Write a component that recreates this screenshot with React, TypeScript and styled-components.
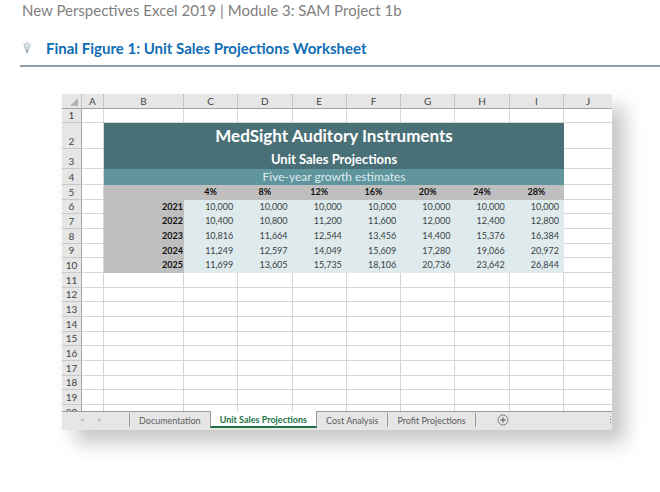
import React from "react";
import styled, { createGlobalStyle, css } from "styled-components";

const GlobalStyle = createGlobalStyle`
  * { box-sizing: border-box; }
  body { margin: 0; background: #fff; }
`;

const gothic = `"Lato", "Open Sans", sans-serif`;

const Page = styled.main`
  font-family: ${gothic};
  overflow: hidden;
  padding-bottom: 60px;
`;

const DocTitle = styled.p`
  margin: 0 0 0 22px;
  font-size: 15px;
  line-height: 20px;
  color: #7f7f7f;
  white-space: nowrap;
`;

const FigureHeading = styled.header`
  display: flex;
  align-items: center;
  gap: 14px;
  margin: 18px 0 27px 20px;
  padding: 0 0 7px 2px;
  border-bottom: 2px solid #919ba5;
`;

const FigureTitle = styled.h1`
  margin: 0;
  font-size: 15px;
  line-height: 20px;
  font-weight: 700;
  color: #0f6db5;
  white-space: nowrap;
`;

const Workbook = styled.section`
  margin: 0 48px 0 62px;
  background: #fff;
  box-shadow: 13px 13px 18px rgba(0, 0, 0, 0.22);
`;

const SheetViewport = styled.div`
  max-height: 317px;
  overflow: hidden;
`;

const Sheet = styled.table`
  width: 100%;
  table-layout: fixed;
  border-collapse: separate;
  border-spacing: 0;
  font-size: 10px;
  line-height: 12px;
  color: #3a4244;
`;

const Col = styled.col<{ $w?: number }>`
  ${(p) => p.$w && `width: ${p.$w}px;`}
`;

const Row = styled.tr<{ $h: number }>`
  height: ${(p) => p.$h}px;
`;

const headCell = css`
  padding: 0;
  background: #e6e6e6;
  font-weight: 400;
  color: #444;
`;

const ColumnHead = styled.th`
  ${headCell}
  border-right: 1px solid #c4c4c4;
  border-bottom: 1px solid #a3a3a3;
  &:last-child { border-right: 0; }
`;

const Corner = styled.td`
  ${headCell}
  border-right: 1px solid #c4c4c4;
  border-bottom: 1px solid #a3a3a3;
  vertical-align: bottom;
  text-align: right;
  svg { display: block; margin: 0 2px 1px auto; }
`;

const RowHead = styled.th`
  ${headCell}
  padding-bottom: 1px;
  border-right: 1px solid #a9a9a9;
  border-bottom: 1px solid #c8c8c8;
  text-align: center;
  vertical-align: bottom;
`;

const Cell = styled.td`
  padding: 0;
  border-right: 1px solid #d6d6d6;
  border-bottom: 1px solid #d6d6d6;
  &:last-child { border-right: 0; }
`;

const Banner = styled.th<{ $size: number; $light?: boolean }>`
  padding: 0;
  background: ${(p) => (p.$light ? "#60959e" : "#4a7077")};
  color: ${(p) => (p.$light ? "#dcebed" : "#fff")};
  font-size: ${(p) => p.$size}px;
  line-height: 14px;
  font-weight: ${(p) => (p.$light ? 400 : 700)};
  text-align: center;
  vertical-align: middle;
`;

const GreyCell = styled.th<{ $align?: "right" | "center" }>`
  padding: 1px 1px 0 0;
  background: #bfbfbf;
  color: #111;
  font-size: 9px;
  font-weight: 700;
  text-align: ${(p) => p.$align ?? "center"};
  vertical-align: top;
`;

const Value = styled.td`
  padding: 1px 5px 0 0;
  background: #deeaec;
  font-size: 9px;
  text-align: right;
  vertical-align: top;
`;

const TabBar = styled.nav`
  display: flex;
  align-items: stretch;
  height: 19px;
  padding-bottom: 2px;
  background: #e6e6e6;
  white-space: nowrap;
  overflow: hidden;
`;

const edge = css`
  border: 0 solid #9b9b9b;
  border-top-width: 1px;
`;

const Scrollers = styled.div`
  ${edge}
  display: flex;
  align-items: center;
  gap: 14px;
  width: 67px;
  padding-left: 18px;
`;

const Scroller = styled.button`
  display: flex;
  align-items: center;
  margin: 0;
  padding: 0;
  background: none;
  border: 0;
`;

const Divider = styled.span`
  ${edge}
  padding-top: 1px;
  &::after {
    content: "";
    display: block;
    width: 1px;
    height: 14px;
    background: #9b9b9b;
  }
`;

const Tab = styled.button<{ $active?: boolean }>`
  ${edge}
  margin: 0;
  padding: 1px 9px 0;
  font-family: inherit;
  font-size: 9px;
  line-height: 14px;
  background: none;
  color: #5a5a5a;
  ${(p) =>
    p.$active &&
    css`
      padding-top: 3px;
      border-width: 0 1px 2px;
      border-bottom-color: #217346;
      background: #fff;
      color: #217346;
      font-weight: 700;
      line-height: 12px;
    `}
`;

const TabRest = styled.div`
  ${edge}
  flex: 1;
  display: flex;
  align-items: center;
  justify-content: space-between;
  padding-left: 21px;
`;

const columns = ["A", "B", "C", "D", "E", "F", "G", "H", "I", "J"];
const rates = ["4%", "8%", "12%", "16%", "20%", "24%", "28%"];
const projections: [string, string[]][] = [
  ["2021", ["10,000", "10,000", "10,000", "10,000", "10,000", "10,000", "10,000"]],
  ["2022", ["10,400", "10,800", "11,200", "11,600", "12,000", "12,400", "12,800"]],
  ["2023", ["10,816", "11,664", "12,544", "13,456", "14,400", "15,376", "16,384"]],
  ["2024", ["11,249", "12,597", "14,049", "15,609", "17,280", "19,066", "20,972"]],
  ["2025", ["11,699", "13,605", "15,735", "18,106", "20,736", "23,642", "26,844"]],
];
const emptyRows = [11, 12, 13, 14, 15, 16, 17, 18, 19, 20];

const rowHeight = (n: number) => (n % 3 === 0 ? 14 : 15);

function Bulb() {
  return (
    <svg width="10" height="14" viewBox="0 0 10 14" fill="none" stroke="#a3b1bb" aria-hidden="true">
      <path d="M.5 4h1M8.5 4h1M1.5 1.2l.8.7M8.5 1.2l-.8.7M5 0v1" strokeWidth=".7" />
      <path d="M3.7 8.7C3.6 7.4 2.4 6.6 2.4 4.8a2.6 2.6 0 0 1 5.2 0c0 1.8-1.2 2.6-1.3 3.9z" fill="#e3eaee" strokeWidth=".9" />
      <path d="M4.2 4.9l.8 1 .8-1M5 6v2.6" strokeWidth=".6" />
      <path d="M3.6 9.6h2.8M3.8 10.9h2.4M4.3 12.1h1.4" stroke="#7f8f9b" strokeWidth=".9" />
    </svg>
  );
}

export default function App() {
  return (
    <>
      <GlobalStyle />
      <Page>
        <DocTitle>New Perspectives Excel 2019 | Module 3: SAM Project 1b</DocTitle>
        <FigureHeading>
          <Bulb />
          <FigureTitle>Final Figure 1: Unit Sales Projections Worksheet</FigureTitle>
        </FigureHeading>
        <Workbook>
          <SheetViewport>
            <Sheet>
              <colgroup>
                <Col $w={20} />
                <Col $w={22} />
                <Col $w={80} />
                {rates.map((r) => <Col key={r} />)}
                <Col $w={48} />
              </colgroup>
              <thead>
                <Row $h={15}>
                  <Corner>
                    <svg width="10" height="10" viewBox="0 0 10 10" aria-hidden="true">
                      <path d="M9 1v8H1z" fill="#b2b2b2" />
                    </svg>
                  </Corner>
                  {columns.map((c) => <ColumnHead key={c} scope="col">{c}</ColumnHead>)}
                </Row>
              </thead>
              <tbody>
                <Row $h={14}>
                  <RowHead scope="row">1</RowHead>
                  {columns.map((c) => <Cell key={c} />)}
                </Row>
                <Row $h={26}>
                  <RowHead scope="row">2</RowHead>
                  <Cell />
                  <Banner colSpan={8} $size={17}>MedSight Auditory Instruments</Banner>
                  <Cell />
                </Row>
                <Row $h={20}>
                  <RowHead scope="row">3</RowHead>
                  <Cell />
                  <Banner colSpan={8} $size={13}>Unit Sales Projections</Banner>
                  <Cell />
                </Row>
                <Row $h={16}>
                  <RowHead scope="row">4</RowHead>
                  <Cell />
                  <Banner colSpan={8} $size={12} $light>Five-year growth estimates</Banner>
                  <Cell />
                </Row>
                <Row $h={15}>
                  <RowHead scope="row">5</RowHead>
                  <Cell />
                  <GreyCell as="td" />
                  {rates.map((r) => <GreyCell key={r} scope="col">{r}</GreyCell>)}
                  <Cell />
                </Row>
                {projections.map(([year, values], i) => (
                  <Row key={year} $h={rowHeight(i + 6)}>
                    <RowHead scope="row">{i + 6}</RowHead>
                    <Cell />
                    <GreyCell scope="row" $align="right">{year}</GreyCell>
                    {values.map((v, j) => <Value key={rates[j]}>{v}</Value>)}
                    <Cell />
                  </Row>
                ))}
                {emptyRows.map((n) => (
                  <Row key={n} $h={rowHeight(n)}>
                    <RowHead scope="row">{n}</RowHead>
                    {columns.map((c) => <Cell key={c} />)}
                  </Row>
                ))}
              </tbody>
            </Sheet>
          </SheetViewport>
          <TabBar aria-label="Worksheets">
            <Scrollers>
              <Scroller aria-label="Previous sheet">
                <svg width="4" height="6" viewBox="0 0 4 6"><path d="M3.5 1v4L.5 3z" fill="#bdbdbd" /></svg>
              </Scroller>
              <Scroller aria-label="Next sheet">
                <svg width="4" height="6" viewBox="0 0 4 6"><path d="M.5 1v4l3-2z" fill="#bdbdbd" /></svg>
              </Scroller>
            </Scrollers>
            <Divider />
            <Tab>Documentation</Tab>
            <Tab $active aria-current="page">Unit Sales Projections</Tab>
            <Tab>Cost Analysis</Tab>
            <Divider />
            <Tab>Profit Projections</Tab>
            <Divider />
            <TabRest>
              <Scroller aria-label="New sheet">
                <svg width="12" height="12" viewBox="0 0 12 12" fill="none" stroke="#777">
                  <circle cx="6" cy="6" r="5" strokeWidth=".9" />
                  <path d="M6 3.3v5.4M3.3 6h5.4" strokeWidth="1.3" />
                </svg>
              </Scroller>
              <svg width="2" height="8" viewBox="0 0 2 8" fill="#8c8c8c" aria-hidden="true">
                <path d="M0 0h1v1H0zM0 3h1v1H0zM0 6h1v1H0z" />
              </svg>
            </TabRest>
          </TabBar>
        </Workbook>
      </Page>
    </>
  );
}
